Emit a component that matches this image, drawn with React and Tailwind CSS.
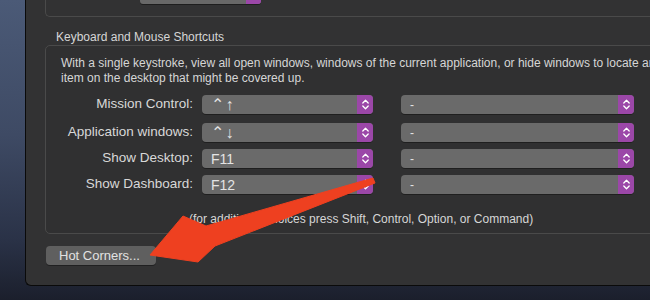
import React from "react";

function Chevrons() {
  return (
    <svg width="9" height="13" viewBox="0 0 9 13" fill="none" stroke="#ffffff" strokeWidth="1.3" strokeLinecap="round" strokeLinejoin="round">
      <path d="M1.8 5 L4.5 2.2 L7.2 5" />
      <path d="M1.8 8 L4.5 10.8 L7.2 8" />
    </svg>
  );
}

function Popup({ value, width, dash, keys }) {
  let size = "text-[14px]";
  if (dash) size = "text-[12px]";
  if (keys) size = "text-[16px] tracking-[1px]";
  return (
    <div
      className={`flex h-[19px] shrink-0 items-stretch overflow-hidden rounded-[4px] bg-[#6a6a6a] shadow-[0_1px_0_rgba(0,0,0,0.35)] ${width}`}
    >
      <div className={`flex flex-1 items-center pl-[9px] leading-none text-[#e4e4e4] ${size}`}>{value}</div>
      <div className="flex w-[16px] items-center justify-center bg-[#9b47a8]">
        <Chevrons />
      </div>
    </div>
  );
}

function Row({ label, value, mt, keys }) {
  return (
    <div className={`flex h-[19px] items-center ${mt}`}>
      <div className="w-[147px] shrink-0 text-right text-[13.5px] text-[#d8d8d8]">{label}</div>
      <div className="ml-[9px]">
        <Popup value={value} width="w-[171px]" keys={keys} />
      </div>
      <div className="ml-[28px]">
        <Popup value="-" width="w-[233px]" dash />
      </div>
    </div>
  );
}

export default function App() {
  return (
    <div
      className="relative flex h-[300px] w-[650px] overflow-hidden bg-[linear-gradient(180deg,#4b5a77_0%,#3e4a64_45%,#2a3247_80%,#1b1f2c_100%)]"
      style={{ fontFamily: '"Liberation Sans", "DejaVu Sans", Arial, sans-serif' }}
    >
      <div className="w-[25px] shrink-0" />
      <div className="h-[286px] w-[700px] shrink-0 rounded-bl-[6px] border-b border-l border-[#0a0a0a] bg-[#323233]">
        {/* top box remnant */}
        <div className="ml-[19px] h-[17px] w-[680px] rounded-bl-[5px] border-b border-l border-[#4a4a4a]">
          <div className="ml-[94px] flex h-[4px] w-[121px] overflow-hidden rounded-b-[3px] bg-[#686868] shadow-[0_1px_0_rgba(0,0,0,0.4)]">
            <div className="flex-1" />
            <div className="w-[15px] bg-[#9b47a8]" />
          </div>
        </div>

        <div className="ml-[30px] mt-[13px] h-[15px] text-[12px] leading-[15px] text-[#d6d6d6]">
          Keyboard and Mouse Shortcuts
        </div>

        <div className="ml-[19px] w-[680px] rounded-[5px] border border-[#4a4a4a] bg-[#303031] pb-[6px] pt-[10px]">
          <div className="ml-[15px] whitespace-nowrap text-[12px] leading-[15px] text-[#d6d6d6]">
            <div>With a single keystroke, view all open windows, windows of the current application, or hide windows to locate an</div>
            <div>item on the desktop that might be covered up.</div>
          </div>
          <Row label="Mission Control:" value="⌃↑" mt="mt-[9px]" keys />
          <Row label="Application windows:" value="⌃↓" mt="mt-[9px]" keys />
          <Row label="Show Desktop:" value="F11" mt="mt-[7px]" />
          <Row label="Show Dashboard:" value="F12" mt="mt-[7px]" />
          <div className="ml-[143px] mt-[18px] h-[15px] whitespace-nowrap text-[12px] leading-[15px] text-[#d6d6d6]">
            (for additional choices press Shift, Control, Option, or Command)
          </div>
        </div>

        <div className="ml-[20px] mt-[12px] flex h-[19px] w-[110px] items-center rounded-[4px] bg-[#5f5f5f] pl-[13px] text-[13px] text-[#e2e2e2] shadow-[0_1px_0_rgba(0,0,0,0.35)]">
          Hot Corners...
        </div>
      </div>

      <svg className="pointer-events-none absolute left-0 top-0" width="650" height="300" viewBox="0 0 650 300">
        <polygon
          points="150,255 183,216 206,226 373,178 375,183 215,246 198,262"
          fill="#ee4020"
          stroke="#ee4020"
          strokeWidth="1"
          strokeLinejoin="round"
        />
      </svg>
    </div>
  );
}
